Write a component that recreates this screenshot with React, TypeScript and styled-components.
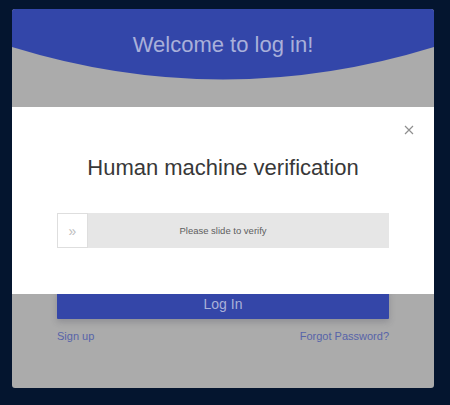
import styled, { createGlobalStyle } from "styled-components";

const GlobalStyle = createGlobalStyle`
  html, body {
    margin: 0;
    padding: 0;
    background: #04152f;
    font-family: "Liberation Sans", Arial, sans-serif;
  }
`;

const Page = styled.div`
  width: 450px;
  height: 405px;
  padding: 9px 16px 0 12px;
  box-sizing: border-box;
`;

const Card = styled.div`
  position: relative;
  width: 422px;
  height: 379px;
  background: #ababab;
  border-radius: 3px;
  overflow: hidden;
`;

const Header = styled.div`
  height: 71px;
  background: #3346a9;
  clip-path: path("M0 0 H422 V38 Q211 103 0 38 Z");
  display: flex;
  justify-content: center;
  padding-top: 23px;
  box-sizing: border-box;
`;

const Welcome = styled.h1`
  margin: 0;
  font-size: 22px;
  font-weight: 400;
  line-height: 26px;
  color: #a9b0da;
`;

const Form = styled.div`
  display: flex;
  flex-direction: column;
  padding: 51px 45px 0;
`;

const Field = styled.div<{ $gap: number }>`
  height: 36px;
  margin-bottom: ${(p) => p.$gap}px;
  border-bottom: 1px solid #a6a6a6;
`;

const LoginButton = styled.button`
  height: 30px;
  border: 0;
  border-radius: 1px;
  background: #3446a8;
  color: #aab1d9;
  font-family: inherit;
  font-size: 14px;
  box-shadow: 0 3px 6px rgba(60, 60, 80, 0.25);
  padding: 0;
`;

const Links = styled.div`
  display: flex;
  justify-content: space-between;
  margin-top: 10px;
  line-height: 15px;
  font-size: 11px;
`;

const LinkText = styled.span`
  color: #5764a9;
`;

const Modal = styled.div`
  position: absolute;
  left: 0;
  right: 0;
  top: 98px;
  height: 187px;
  background: #fff;
  display: flex;
  flex-direction: column;
  align-items: center;
`;

const Close = styled.button`
  position: absolute;
  top: 17px;
  right: 19px;
  width: 12px;
  height: 12px;
  padding: 0;
  border: 0;
  background: none;
  display: flex;
  align-items: center;
  justify-content: center;
`;

const Title = styled.h2`
  margin: 48px 0 0;
  font-size: 22px;
  font-weight: 400;
  line-height: 26px;
  color: #383838;
`;

const Slider = styled.div`
  position: relative;
  margin-top: 32px;
  width: 332px;
  height: 35px;
  background: #e6e6e6;
  display: flex;
  align-items: center;
  justify-content: center;
`;

const Handle = styled.div`
  position: absolute;
  left: 0;
  top: 0;
  width: 31px;
  height: 35px;
  box-sizing: border-box;
  background: #fff;
  border: 1px solid #dedede;
  display: flex;
  align-items: center;
  justify-content: center;
  color: #bdbdbd;
  font-size: 14px;
`;

const Hint = styled.span`
  font-size: 9.5px;
  color: #5e5e5e;
`;

export default function App() {
  return (
    <>
      <GlobalStyle />
      <Page>
        <Card>
          <Header>
            <Welcome>Welcome to log in!</Welcome>
          </Header>
          <Form>
            <Field $gap={24} />
            <Field $gap={60} />
            <LoginButton>Log In</LoginButton>
            <Links>
              <LinkText>Sign up</LinkText>
              <LinkText>Forgot Password?</LinkText>
            </Links>
          </Form>
          <Modal>
            <Close aria-label="close">
              <svg width="10" height="10" viewBox="0 0 10 10">
                <path d="M1 1 L9 9 M9 1 L1 9" stroke="#8f8f8f" strokeWidth="1.2" />
              </svg>
            </Close>
            <Title>Human machine verification</Title>
            <Slider>
              <Handle>»</Handle>
              <Hint>Please slide to verify</Hint>
            </Slider>
          </Modal>
        </Card>
      </Page>
    </>
  );
}
